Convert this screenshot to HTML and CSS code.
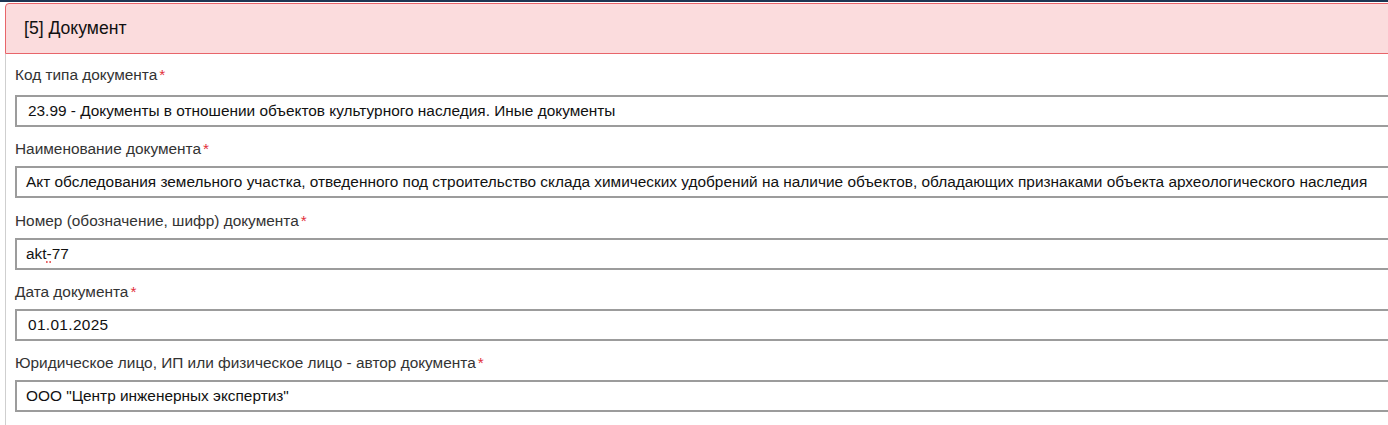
FILE: index.html
```html
<!DOCTYPE html>
<html lang="ru">
<head>
<meta charset="utf-8">
<title>Документ</title>
<link rel="stylesheet" href="styles.css">
</head>
<body>
<div class="topbar"></div>
<div class="panel">
  <div class="panel-head">[5] Документ</div>
  <div class="panel-body">
    <div class="field">
      <div class="label">Код типа документа<span class="req">*</span></div>
      <div class="input pad-wide">23.99 - Документы в отношении объектов культурного наследия. Иные документы</div>
    </div>
    <div class="field">
      <div class="label">Наименование документа<span class="req">*</span></div>
      <div class="input">Акт обследования земельного участка, отведенного под строительство склада химических удобрений на наличие объектов, обладающих признаками объекта археологического наследия</div>
    </div>
    <div class="field">
      <div class="label">Номер (обозначение, шифр) документа<span class="req">*</span></div>
      <div class="input">akt<span class="spell">-</span>77</div>
    </div>
    <div class="field">
      <div class="label">Дата документа<span class="req">*</span></div>
      <div class="input pad-wide date">01.01.2025</div>
    </div>
    <div class="field">
      <div class="label">Юридическое лицо, ИП или физическое лицо - автор документа<span class="req">*</span></div>
      <div class="input">ООО "Центр инженерных экспертиз"</div>
    </div>
  </div>
</div>
</body>
</html>
```

FILE: styles.css
```css
html, body {
  margin: 0;
  padding: 0;
  background: #ffffff;
  overflow: hidden;
}
body {
  font-family: "Liberation Sans", Arial, sans-serif;
  color: #222;
  width: 1388px;
  height: 425px;
}
.topbar {
  height: 2px;
  background: #1d3553;
  margin-bottom: 1px;
}
.panel {
  margin-left: 5px;
  width: 1420px;
  border-radius: 4px 4px 0 0;
}
.panel-head {
  background: #fbdcdd;
  border: 1px solid #e8656a;
  border-radius: 4px 4px 0 0;
  box-sizing: border-box;
  height: 51px;
  padding-left: 18px;
  display: flex;
  align-items: center;
  font-size: 17.6px;
  color: #111;
}
.panel-body {
  border-left: 1px solid #cfcfcf;
  padding: 11px 0 20px 9px;
  display: flex;
  flex-direction: column;
  gap: 12.25px;
}
.label {
  font-size: 15.4px;
  line-height: 20px;
  color: #333;
  margin-bottom: 7px;
}
.field:first-child .label {
  margin-bottom: 10px;
}
.req {
  color: #e2303a;
  margin-left: 2px;
}
.input {
  height: 32px;
  box-sizing: border-box;
  border: 2px solid #9c9c9c;
  padding: 0 9px;
  font-size: 15.4px;
  display: flex;
  align-items: center;
  white-space: nowrap;
  color: #111;
}
.pad-wide {
  padding-left: 11px;
}
.date {
  letter-spacing: 0.35px;
}
.spell {
  text-decoration: underline dotted #e03030;
  text-underline-offset: 3px;
}
```
